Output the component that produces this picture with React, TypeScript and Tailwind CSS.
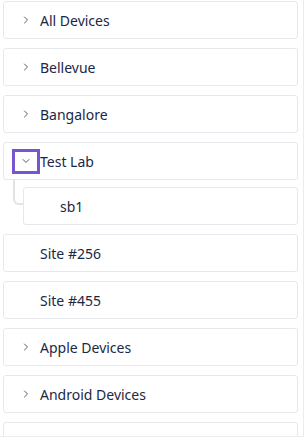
import { ChevronRight, ChevronDown } from "lucide-react";

type Node = { name: string; chevron?: boolean; open?: boolean; children?: string[] };

const nodes: Node[] = [
  { name: "All Devices", chevron: true },
  { name: "Bellevue", chevron: true },
  { name: "Bangalore", chevron: true },
  { name: "Test Lab", chevron: true, open: true, children: ["sb1"] },
  { name: "Site #256" },
  { name: "Site #455" },
  { name: "Apple Devices", chevron: true },
  { name: "Android Devices", chevron: true },
  { name: "Linux Devices", chevron: true },
];

function Row({ node }: { node: Node }) {
  return (
    <div className="flex h-[38px] items-center rounded-[3px] border border-[#e6e8ec] bg-white pl-2">
      <span
        className={
          node.open
            ? "flex h-[25px] w-[28px] items-center justify-center border-[3px] border-[#7656cf] text-[#3f4859]"
            : "flex h-[25px] w-[28px] items-center justify-center text-[#3f4859]"
        }
      >
        {node.chevron &&
          (node.open ? (
            <ChevronDown size={12} strokeWidth={1.75} />
          ) : (
            <ChevronRight size={12} strokeWidth={1.75} />
          ))}
      </span>
      <span className="text-[14px] text-[#1b2845]">{node.name}</span>
    </div>
  );
}

export default function App() {
  return (
    <div
      className="h-[437px] w-[304px] overflow-hidden border-r border-b border-[#e9ecf0] bg-white pt-px pl-[3px] pr-[5px]"
      style={{ fontFamily: '"Noto Sans", "Open Sans", sans-serif' }}
    >
      <ul className="flex flex-col gap-[9px]">
        {nodes.map((node) => (
          <li key={node.name}>
            <Row node={node} />
            {node.open && node.children && (
              <ul className="relative mt-[7px] flex flex-col gap-[9px] pl-5">
                {node.children.map((child) => (
                  <li key={child} className="relative">
                    <span className="absolute -top-[8px] -left-[10px] h-[26px] w-[10px] rounded-bl-[6px] border-b-2 border-l-2 border-[#e0e4e8]" />
                    <div className="flex h-[38px] items-center rounded-[3px] border border-[#e6e8ec] bg-white pl-9">
                      <span className="text-[14px] text-[#1b2845]">{child}</span>
                    </div>
                  </li>
                ))}
              </ul>
            )}
          </li>
        ))}
      </ul>
    </div>
  );
}
